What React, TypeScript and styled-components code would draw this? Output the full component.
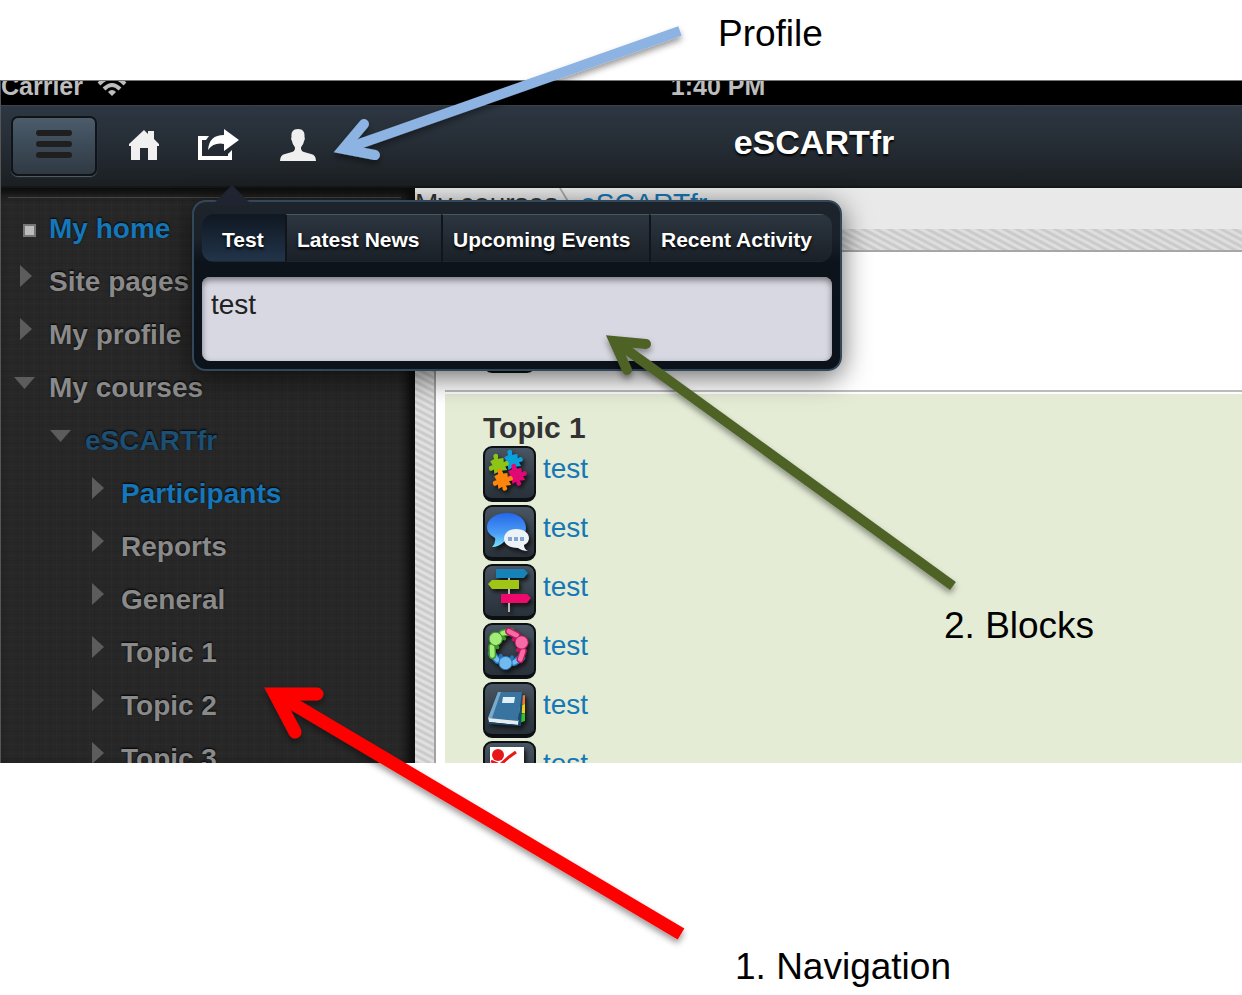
import React from "react";
import styled, { createGlobalStyle, css } from "styled-components";

const Global = createGlobalStyle`
  * { box-sizing: border-box; }
  body {
    margin: 0;
    background: #fff;
    font-family: "Liberation Sans", Arial, sans-serif;
  }
  button { font-family: inherit; cursor: pointer; }
  a { text-decoration: none; color: inherit; }
  ul { list-style: none; margin: 0; padding: 0; }
  h1, h2, p { margin: 0; }
`;

const hatch = (from: string, to: string) => css`
  background: repeating-linear-gradient(28deg, ${from} 0 2px, ${to} 3px 5px, ${from} 6px);
`;

const Page = styled.div`
  position: relative;
  min-height: 100vh;
  overflow: hidden;
`;

const Note = styled.p<{ $indent: number }>`
  padding-left: ${(p) => p.$indent}px;
  font-size: 37px;
  line-height: 44px;
  color: #000;
`;

const TopNotes = styled.div`
  height: 80px;
  padding-top: 12px;
`;

const BottomNotes = styled.div`
  padding-top: 182px;
`;

const FloatingNote = styled.p`
  position: absolute;
  left: 944px;
  top: 604px;
  font-size: 37px;
  line-height: 44px;
`;

const Device = styled.div`
  position: relative;
  height: 683px;
  overflow: hidden;
  display: flex;
  flex-direction: column;
  border-top: 1px solid #777;
  border-left: 1px solid #555;
`;

const StatusBar = styled.div`
  flex: none;
  height: 24px;
  display: flex;
  align-items: flex-end;
  background: #000;
  color: #bdbdbd;
  font-size: 25px;
  font-weight: bold;
  line-height: 28px;
  overflow: hidden;
  padding-bottom: 5px;
`;

const Carrier = styled.div`
  width: 193px;
  display: flex;
  align-items: flex-end;
  gap: 14px;
  svg { margin-bottom: 3px; }
`;

const Clock = styled.div`
  flex: 1;
  text-align: center;
`;

const Toolbar = styled.header`
  flex: none;
  height: 83px;
  display: flex;
  align-items: center;
  background: linear-gradient(#2d3742, #252c34 50%, #1b1f22);
  border-top: 1px solid #3a434d;
  border-bottom: 2px solid #14171a;
`;

const Tools = styled.div`
  width: 385px;
  padding-left: 10px;
  display: flex;
  align-items: center;
`;

const MenuButton = styled.button`
  width: 86px;
  height: 60px;
  margin-right: 21px;
  padding: 0 0 2px;
  display: grid;
  place-items: center;
  border: 2px solid #101418;
  border-radius: 7px;
  background: linear-gradient(#4c5c6b, #3c4a57 50%, #2f3943);
  box-shadow: 0 1px 1px #56616c;
`;

const IconButton = styled.button`
  width: 52px;
  height: 48px;
  margin-right: 25px;
  padding: 0 0 2px;
  display: grid;
  place-items: center;
  border: 0;
  background: none;
`;

const Title = styled.h1`
  flex: 1;
  text-align: center;
  color: #fff;
  font-size: 34px;
  line-height: 40px;
  padding-bottom: 8px;
  text-shadow: 0 2px 2px #000;
`;

const Body = styled.div`
  flex: 1;
  min-height: 0;
  display: flex;
`;

const Sidebar = styled.nav`
  flex: none;
  width: 414px;
  padding: 9px 14px 0 7px;
  overflow: hidden;
  background:
    repeating-linear-gradient(90deg, rgba(255, 255, 255, 0.012) 0 1px, transparent 1px 5px, rgba(0, 0, 0, 0.06) 5px 6px, transparent 6px 11px),
    repeating-linear-gradient(0deg, rgba(255, 255, 255, 0.012) 0 1px, transparent 1px 4px, rgba(0, 0, 0, 0.06) 4px 5px, transparent 5px 9px),
    #272727;
  box-shadow: inset -12px 0 8px -4px #0c0c0c, inset 0 10px 8px -4px #0e0e0e;
`;

const Tree = styled.ul`
  border-top: 1px solid #454545;
  padding-top: 4px;
`;

const TreeItem = styled.li<{ $level: number }>`
  height: 53px;
  padding-left: ${(p) => p.$level * 36 + 5}px;
  display: flex;
  align-items: center;
`;

const Marker = styled.span`
  flex: none;
  width: 36px;
  height: 40px;
`;

const TreeLink = styled.a<{ $tone: string }>`
  color: ${(p) => p.$tone};
  font-size: 28px;
  font-weight: bold;
  line-height: 32px;
  text-shadow: 0 -1px 2px #000;
`;

const Main = styled.main`
  flex: 1;
  min-width: 0;
  display: flex;
  flex-direction: column;
`;

const Breadcrumbs = styled.div`
  flex: none;
  height: 41px;
  display: flex;
  align-items: flex-start;
  background: #e9e9e9;
  color: #333;
  font-size: 28px;
  line-height: 32px;
  a { color: #1577b5; }
`;

const HatchRow = styled.div`
  flex: none;
  height: 23px;
  ${hatch("#cbcbcb", "#dedede")}
  border-bottom: 2px solid #a6a6a6;
`;

const Columns = styled.div`
  flex: 1;
  min-height: 0;
  display: flex;
`;

const HatchColumn = styled.div`
  flex: none;
  width: 21px;
  margin-right: 9px;
  ${hatch("#cbcbcb", "#e0e0e0")}
  border-right: 2px solid #a2a2a2;
`;

const Sections = styled.div`
  flex: 1;
  min-width: 0;
`;

const General = styled.section`
  height: 140px;
  padding: 65px 0 0 38px;
  border-bottom: 2px solid #bcbcbc;
`;

const Topic = styled.section`
  margin-top: 2px;
  min-height: 400px;
  padding: 16px 0 0 38px;
  background: #e4ecd6;
  h2 {
    color: #333;
    font-size: 30px;
    line-height: 36px;
  }
`;

const Activity = styled.li`
  height: 59px;
  display: flex;
  align-items: flex-start;
  gap: 7px;
  a {
    color: #1577b5;
    font-size: 28px;
    line-height: 46px;
  }
`;

const Tile = styled.span`
  display: block;
  width: 53px;
  height: 56px;
  overflow: hidden;
  border: 2px solid #0d1013;
  border-bottom-width: 4px;
  border-radius: 9px;
  background: linear-gradient(#495663, #333d47 60%, #29313a);
  svg { display: block; filter: drop-shadow(2px 3px 2px #111); }
`;

const Popover = styled.div`
  position: absolute;
  left: 191px;
  top: 119px;
  width: 650px;
  height: 171px;
  padding: 12px 8px 8px;
  display: flex;
  flex-direction: column;
  gap: 15px;
  border: 2px solid #33475a;
  border-radius: 14px;
  background: linear-gradient(#1e242c, #1a2129 22%, #0c131b 36%, #0b1219);
  box-shadow: 0 6px 28px rgba(0, 0, 0, 0.6);
`;

const Caret = styled.svg`
  position: absolute;
  left: 18px;
  top: -17px;
`;

const Tabs = styled.div`
  flex: none;
  height: 48px;
  display: grid;
  grid-template-columns: 83fr 156fr 208fr 183fr;
  overflow: hidden;
  border-radius: 12px;
`;

const Tab = styled.button<{ $active?: boolean }>`
  padding: 3px 0 0 ${(p) => (p.$active ? 20 : 10)}px;
  border: 0;
  border-top: 1px solid ${(p) => (p.$active ? "#111a24" : "#4a5560")};
  border-bottom: 1px solid #20262c;
  color: #fff;
  font-size: 21px;
  font-weight: bold;
  text-align: left;
  white-space: nowrap;
  text-shadow: 0 2px 3px #000;
  background: ${(p) =>
    p.$active ? "linear-gradient(#0f1822, #22344a)" : "linear-gradient(#2c3640, #1a2027)"};
  & + & { border-left: 2px solid #11151a; }
`;

const Panel = styled.div`
  flex: 1;
  padding: 12px 9px;
  border-radius: 8px;
  background: #d8d8e2;
  box-shadow: inset 0 3px 6px #77777f;
  color: #222;
  font-size: 28px;
  line-height: 32px;
`;

const Arrows = styled.svg`
  position: absolute;
  left: 0;
  top: 0;
  pointer-events: none;
`;

const Wifi = () => (
  <svg width="30" height="22" viewBox="0 0 30 22" fill="none" stroke="#bdbdbd" strokeWidth="4">
    <path d="M2 9Q15 -4 28 9" />
    <path d="M7 14Q15 6 23 14" />
    <path d="M15 21L11 17Q15 13 19 17Z" fill="#bdbdbd" stroke="none" />
  </svg>
);

const Bars = () => (
  <svg width="38" height="32" viewBox="0 0 38 32">
    <g fill="#1f1f1f">
      <rect x="1" y="1" width="36" height="6" rx="3" />
      <rect x="1" y="12" width="36" height="6" rx="3" />
      <rect x="1" y="23" width="36" height="6" rx="3" />
    </g>
  </svg>
);

const Home = () => (
  <svg width="30" height="32" viewBox="0 0 30 32" fill="#f0f0f0">
    <path d="M15 1L19 5V2H25V10L30 15V17H28V31H19V19H11V31H2V17H0V15Z" />
  </svg>
);

const Share = () => (
  <svg width="48" height="34" viewBox="0 0 48 34">
    <path d="M12 8H1V32H35V22L31 26V28H5V12H9Z" fill="#fff" />
    <path d="M27 1L42 12L27 23V16Q17 14 11 22Q12 7 27 7Z" fill="#fff" />
  </svg>
);

const User = () => (
  <svg width="36" height="34" viewBox="0 0 36 34">
    <path
      d="M18 1C23 1 25 4 24.500 9C25 10 25 12 24 13C23.500 17 21 18 21 20Q21 23 24 24L31 26Q36 27 36 33H0Q0 27 5 26L12 24Q15 23 15 20C15 18 12.500 17 12 13C11 12 11 10 11.500 9C11 4 13 1 18 1Z"
      fill="#efefef"
    />
  </svg>
);

type MarkerKind = "square" | "closed" | "open";

const MarkerIcon = ({ kind }: { kind: MarkerKind }) => (
  <svg width="36" height="40" viewBox="0 0 36 40">
    {kind === "square" && (
      <>
        <rect x="10" y="15" width="13" height="13" fill="#777" />
        <rect x="12" y="17" width="9" height="9" fill="#bdbdbd" />
      </>
    )}
    {kind === "closed" && <path d="M7 3L19 14L7 25Z" fill="#5c5c5c" />}
    {kind === "open" && <path d="M1 9H22L11.500 21Z" fill="#5c5c5c" />}
  </svg>
);

const jigsaw =
  "M0 3L5 2Q4 -3 8 -3Q12 -2 9 3L15 4L14 9Q19 7 19 11Q19 15 14 13L15 18L9 17Q11 22 7 22Q3 22 5 17L0 18L1 13Q-4 15 -4 11Q-4 7 1 8Z";

const pieces = [
  { color: "#0aa0dc", x: 28, y: 13 },
  { color: "#8cc516", x: 14, y: 17 },
  { color: "#e10875", x: 32, y: 27 },
  { color: "#ff850c", x: 18, y: 32 },
];

const Puzzle = () => (
  <svg width="49" height="50" viewBox="0 0 49 50">
    {pieces.map((p) => (
      <path
        key={p.color}
        d={jigsaw}
        fill={p.color}
        transform={`translate(${p.x} ${p.y}) rotate(-18) scale(.9) translate(-8 -10)`}
      />
    ))}
  </svg>
);

const Chat = () => (
  <svg width="49" height="50" viewBox="0 0 49 50">
    <defs>
      <linearGradient id="bubble" x2="0" y2="1">
        <stop stopColor="#2468e8" />
        <stop offset=".6" stopColor="#4b9cf5" />
        <stop offset="1" stopColor="#74e3fa" />
      </linearGradient>
    </defs>
    <path d="M22 6C34 6 41 13 41 21C41 30 32 35 20 34Q14 40 7 40Q11 36 10 31C5 28 2 25 2 20C2 12 11 6 22 6Z" fill="url(#bubble)" />
    <path d="M31 22C39 22 44 26 44 31Q44 36 39 38Q39 42 43 44Q37 44 33 41C24 41 19 37 19 32C19 26 24 22 31 22Z" fill="#edf2f8" />
    <path d="M23 30H27V34H23ZM29 30H33V34H29ZM35 30H39V34H35Z" fill="#83a6cc" />
  </svg>
);

const Signpost = () => (
  <svg width="49" height="50" viewBox="0 0 49 50">
    <path d="M24 8V46" stroke="#b5b5b5" strokeWidth="2" />
    <path d="M11 3H39L43 7L39 12H11Z" fill="#1682b8" />
    <path d="M34 14H7L3 18L7 23H34Z" fill="#a0c514" />
    <path d="M16 28H42L46 32L42 37H16Z" fill="#ee0a6c" />
  </svg>
);

const Person = ({ light, dark, angle }: { light: string; dark: string; angle: number }) => (
  <g transform={`rotate(${angle} 25 25)`}>
    <path d="M9 33L16 39M34 39L41 33" stroke={dark} strokeWidth="8" strokeLinecap="round" />
    <path d="M9 33L16 39M34 39L41 33" stroke={light} strokeWidth="5" strokeLinecap="round" />
    <path d="M20 37L19 34M30 37L31 34" stroke={dark} strokeWidth="4" strokeLinecap="round" />
    <circle cx="25" cy="41" r="7" fill={light} stroke={dark} />
  </g>
);

const Group = () => (
  <svg width="49" height="50" viewBox="1 1 52 52">
    <Person light="#72b9ef" dark="#2476b5" angle={8} />
    <Person light="#a4ec79" dark="#3f9627" angle={128} />
    <Person light="#f76aa6" dark="#ba1b60" angle={248} />
  </svg>
);

const Book = () => (
  <svg width="49" height="50" viewBox="0 0 49 50">
    <path d="M34 12L40 11V20H34Z" fill="#f47728" />
    <path d="M34 21L40 20V29H34Z" fill="#f3cf13" />
    <path d="M34 30L40 29V37L34 39Z" fill="#35c22e" />
    <path d="M3 33L4 38L33 41L36 36Z" fill="#e5ebef" />
    <path d="M3 38L33 41L36 9L38 9L36 42L3 40Z" fill="#174a70" />
    <path d="M13 8L37 8L33 37L3 34Z" fill="#38749f" />
    <path d="M13 8L16 8L7 34L3 34Z" fill="#78aaca" />
    <path d="M18 13H30L29 19H17Z" fill="#e1f0f7" />
  </svg>
);

const Whiteboard = () => (
  <svg width="49" height="50" viewBox="0 0 49 50">
    <path d="M5 4H39V44H5Z" fill="#fff" />
    <circle cx="13" cy="12" r="6" fill="#e81818" />
    <path d="M6 18L15 22L24 14L31 9M15 22V30" fill="none" stroke="#e81818" strokeWidth="3" />
  </svg>
);

const GREY = "#8a8a8a";
const BLUE = "#1577b9";

const nodes: { label: string; level: number; marker: MarkerKind; tone: string }[] = [
  { label: "My home", level: 0, marker: "square", tone: BLUE },
  { label: "Site pages", level: 0, marker: "closed", tone: GREY },
  { label: "My profile", level: 0, marker: "closed", tone: GREY },
  { label: "My courses", level: 0, marker: "open", tone: GREY },
  { label: "eSCARTfr", level: 1, marker: "open", tone: "#1c4f73" },
  { label: "Participants", level: 2, marker: "closed", tone: BLUE },
  { label: "Reports", level: 2, marker: "closed", tone: GREY },
  { label: "General", level: 2, marker: "closed", tone: GREY },
  { label: "Topic 1", level: 2, marker: "closed", tone: GREY },
  { label: "Topic 2", level: 2, marker: "closed", tone: GREY },
  { label: "Topic 3", level: 2, marker: "closed", tone: GREY },
];

const activities = [Puzzle, Chat, Signpost, Group, Book, Whiteboard];

const Arrow = ({ color, width, head, shaft }: { color: string; width: number; head: string; shaft: string }) => (
  <g fill="none" stroke={color} strokeWidth={width} filter="url(#arrow-shadow)">
    <path d={shaft} />
    <path d={head} strokeLinecap="round" strokeLinejoin="miter" />
  </g>
);

export default function App() {
  return (
    <Page>
      <Global />
      <TopNotes>
        <Note $indent={718}>Profile</Note>
      </TopNotes>

      <Device>
        <StatusBar>
          <Carrier>
            Carrier
            <Wifi />
          </Carrier>
          <Clock>1:40 PM</Clock>
        </StatusBar>

        <Toolbar>
          <Tools>
            <MenuButton aria-label="Menu"><Bars /></MenuButton>
            <IconButton aria-label="Home"><Home /></IconButton>
            <IconButton aria-label="Share"><Share /></IconButton>
            <IconButton aria-label="Profile"><User /></IconButton>
          </Tools>
          <Title>eSCARTfr</Title>
        </Toolbar>

        <Body>
          <Sidebar>
            <Tree>
              {nodes.map((n) => (
                <TreeItem key={n.label} $level={n.level}>
                  <Marker><MarkerIcon kind={n.marker} /></Marker>
                  <TreeLink href="#" $tone={n.tone}>{n.label}</TreeLink>
                </TreeItem>
              ))}
            </Tree>
          </Sidebar>

          <Main>
            <Breadcrumbs>
              <span>My courses</span>
              <svg width="22" height="41" viewBox="0 0 22 41" fill="none" stroke="#aaa" strokeWidth="2">
                <path d="M2 0L14 20L2 41" />
              </svg>
              <a href="#">eSCARTfr</a>
            </Breadcrumbs>
            <HatchRow />
            <Columns>
              <HatchColumn />
              <Sections>
                <General><Tile /></General>
                <Topic>
                  <h2>Topic 1</h2>
                  <ul>
                    {activities.map((Icon, i) => (
                      <Activity key={i}>
                        <Tile><Icon /></Tile>
                        <a href="#">test</a>
                      </Activity>
                    ))}
                  </ul>
                </Topic>
              </Sections>
            </Columns>
          </Main>
        </Body>

        <Popover>
          <Caret width="40" height="20" viewBox="0 0 40 20">
            <path d="M0 20L20 0L40 20Z" fill="#202430" />
          </Caret>
          <Tabs role="tablist">
            <Tab role="tab" $active aria-selected>Test</Tab>
            <Tab role="tab">Latest News</Tab>
            <Tab role="tab">Upcoming Events</Tab>
            <Tab role="tab">Recent Activity</Tab>
          </Tabs>
          <Panel>test</Panel>
        </Popover>
      </Device>

      <BottomNotes>
        <Note $indent={735}>1. Navigation</Note>
      </BottomNotes>
      <FloatingNote>2. Blocks</FloatingNote>

      <Arrows width="1242" height="995" viewBox="0 0 1242 995" aria-hidden>
        <defs>
          <filter id="arrow-shadow" x="-10%" y="-10%" width="120%" height="125%">
            <feDropShadow dx="0" dy="4" stdDeviation="3" floodOpacity=".4" />
          </filter>
        </defs>
        <Arrow color="#8db3e2" width={10} shaft="M680 31L345 149" head="M364 124L343 149L375 155" />
        <Arrow color="#4f6228" width={10} shaft="M953 586L616 342" head="M646 344L614 341L627 370" />
        <Arrow color="#ff0000" width={13} shaft="M681 934L278 695" head="M317 694L275 694L295 732" />
      </Arrows>
    </Page>
  );
}
